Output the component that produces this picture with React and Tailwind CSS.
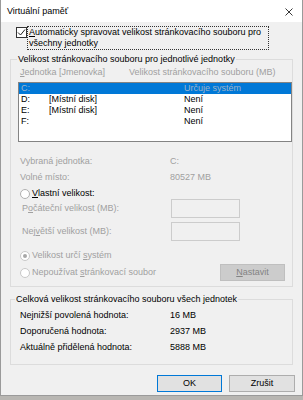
import React from "react";

const G = "text-[#a0a0a0]";

function Radio({ checked, dark }) {
  return (
    <span
      className={`inline-flex items-center justify-center w-[10px] h-[10px] rounded-full bg-white border ${
        dark ? "border-[#b0b0b0]" : "border-[#c8c8c8]"
      } mr-[2px] shrink-0`}
    >
      {checked && <span className="w-[4px] h-[4px] rounded-full bg-[#a8a8a8]" />}
    </span>
  );
}

export default function App() {
  return (
    <div
      className="w-[303px] h-[400px] bg-[#b8b6b2] overflow-hidden text-[9px] leading-[11px] text-black"
      style={{ fontFamily: '"Liberation Sans", Arial, sans-serif' }}
    >
      <div className="w-[303px] h-[396px] bg-[#f0f0f0] border-l border-r border-b border-[#9a9a9a] flex flex-col">
        {/* title bar */}
        <div className="h-[22px] bg-white flex items-center justify-between pl-[6px] pr-[9px] shrink-0">
          <span className="text-[9px]">Virtuální paměť</span>
          <svg width="8" height="8" viewBox="0 0 8 8" className="mt-[1px]">
            <path d="M0.5 0.5 L7.5 7.5 M7.5 0.5 L0.5 7.5" stroke="#222" strokeWidth="0.9" />
          </svg>
        </div>

        {/* checkbox */}
        <div className="flex mt-[4px] ml-[15px]">
          <span className="mt-[1px] w-[11px] h-[11px] bg-white border border-[#333] flex items-center justify-center shrink-0">
            <svg width="9" height="9" viewBox="0 0 9 9">
              <path d="M1 4.5 L3.5 7 L8 1.5" stroke="#222" strokeWidth="1" fill="none" />
            </svg>
          </span>
          <div className="w-[242px] h-[24px] border border-dotted border-[#333] pl-[1px]">
            <div>
              <span className="underline">A</span>utomaticky spravovat velikost stránkovacího souboru pro
            </div>
            <div>všechny jednotky</div>
          </div>
        </div>

        {/* group 1 */}
        <fieldset className="mt-[4px] ml-[9px] w-[283px] border border-[#dcdcdc] pb-[5px]">
          <legend className="ml-[6px] px-[1px]">Velikost stránkovacího souboru pro jednotlivé jednotky</legend>
          <div className={`flex mt-[2px] ${G}`}>
            <span className="ml-[9px] w-[109px]">
              <span className="underline">J</span>ednotka [Jmenovka]
            </span>
            <span>Velikost stránkovacího souboru (MB)</span>
          </div>
          <div className="mt-[4px] ml-[7px] w-[274px] h-[60px] bg-white border border-[#838383]">
            <div className="flex h-[11px] bg-[#0078d7] text-[#9fb4c9]">
              <span className="pl-[2px] w-[30px]">C:</span>
              <span className="w-[135px]"></span>
              <span>Určuje systém</span>
            </div>
            {[
              ["D:", "[Místní disk]", "Není"],
              ["E:", "[Místní disk]", "Není"],
              ["F:", "", "Není"],
            ].map(([a, b, c]) => (
              <div key={a} className="flex h-[11px]">
                <span className="pl-[2px] w-[30px]">{a}</span>
                <span className="w-[135px]">{b}</span>
                <span>{c}</span>
              </div>
            ))}
          </div>

          <div className={`flex mt-[14px] ${G}`}>
            <span className="ml-[9px] w-[150px]">Vybraná jednotka:</span>
            <span>C:</span>
          </div>
          <div className={`flex mt-[5px] ${G}`}>
            <span className="ml-[9px] w-[150px]">Volné místo:</span>
            <span>80527 MB</span>
          </div>
          <div className="flex items-center mt-[5px] ml-[9px] h-[11px]">
            <Radio dark />
            <span>
              <span className="underline">V</span>lastní velikost:
            </span>
          </div>
          <div className={`flex items-center h-[19px] ${G}`}>
            <span className="ml-[11px] w-[149px]">
              P<span className="underline">o</span>čáteční velikost (MB):
            </span>
            <span className="w-[69px] h-[19px] border border-[#cccccc] bg-[#f0f0f0]" />
          </div>
          <div className={`flex items-center h-[19px] mt-[4px] ${G}`}>
            <span className="ml-[11px] w-[149px]">
              Nej<span className="underline">v</span>ětší velikost (MB):
            </span>
            <span className="w-[69px] h-[19px] border border-[#cccccc] bg-[#f0f0f0]" />
          </div>
          <div className={`flex items-center mt-[9px] ml-[9px] h-[11px] ${G}`}>
            <Radio checked />
            <span>
              Velikost určí <span className="underline">s</span>ystém
            </span>
          </div>
          <div className={`flex items-center mt-[3px] h-[17px] ${G}`}>
            <span className="ml-[9px] flex items-center w-[200px]">
              <Radio />
              <span>
                Nepoužívat <span className="underline">s</span>tránkovací soubor
              </span>
            </span>
            <span className="w-[65px] h-[17px] bg-[#cccccc] border border-[#bfbfbf] flex items-center justify-center text-[#838383]">
              <span>
                <span className="underline">N</span>astavit
              </span>
            </span>
          </div>
        </fieldset>

        {/* group 2 */}
        <fieldset className="mt-[7px] ml-[9px] w-[283px] border border-[#dcdcdc] pb-[11px]">
          <legend className="ml-[4px] px-[1px]">Celková velikost stránkovacího souboru všech jednotek</legend>
          {[
            ["Nejnižší povolená hodnota:", "16 MB"],
            ["Doporučená hodnota:", "2937 MB"],
            ["Aktuálně přidělená hodnota:", "5888 MB"],
          ].map(([a, b]) => (
            <div key={a} className="flex mt-[5px]">
              <span className="ml-[9px] w-[150px]">{a}</span>
              <span>{b}</span>
            </div>
          ))}
        </fieldset>

        {/* buttons */}
        <div className="flex mt-[10px] ml-[156px] gap-[7px]">
          <button className="w-[65px] h-[17px] bg-[#e1e1e1] border border-[#0078d7] flex items-center justify-center">
            OK
          </button>
          <button className="w-[66px] h-[17px] bg-[#e1e1e1] border border-[#adadad] flex items-center justify-center">
            Zrušit
          </button>
        </div>
      </div>
    </div>
  );
}
